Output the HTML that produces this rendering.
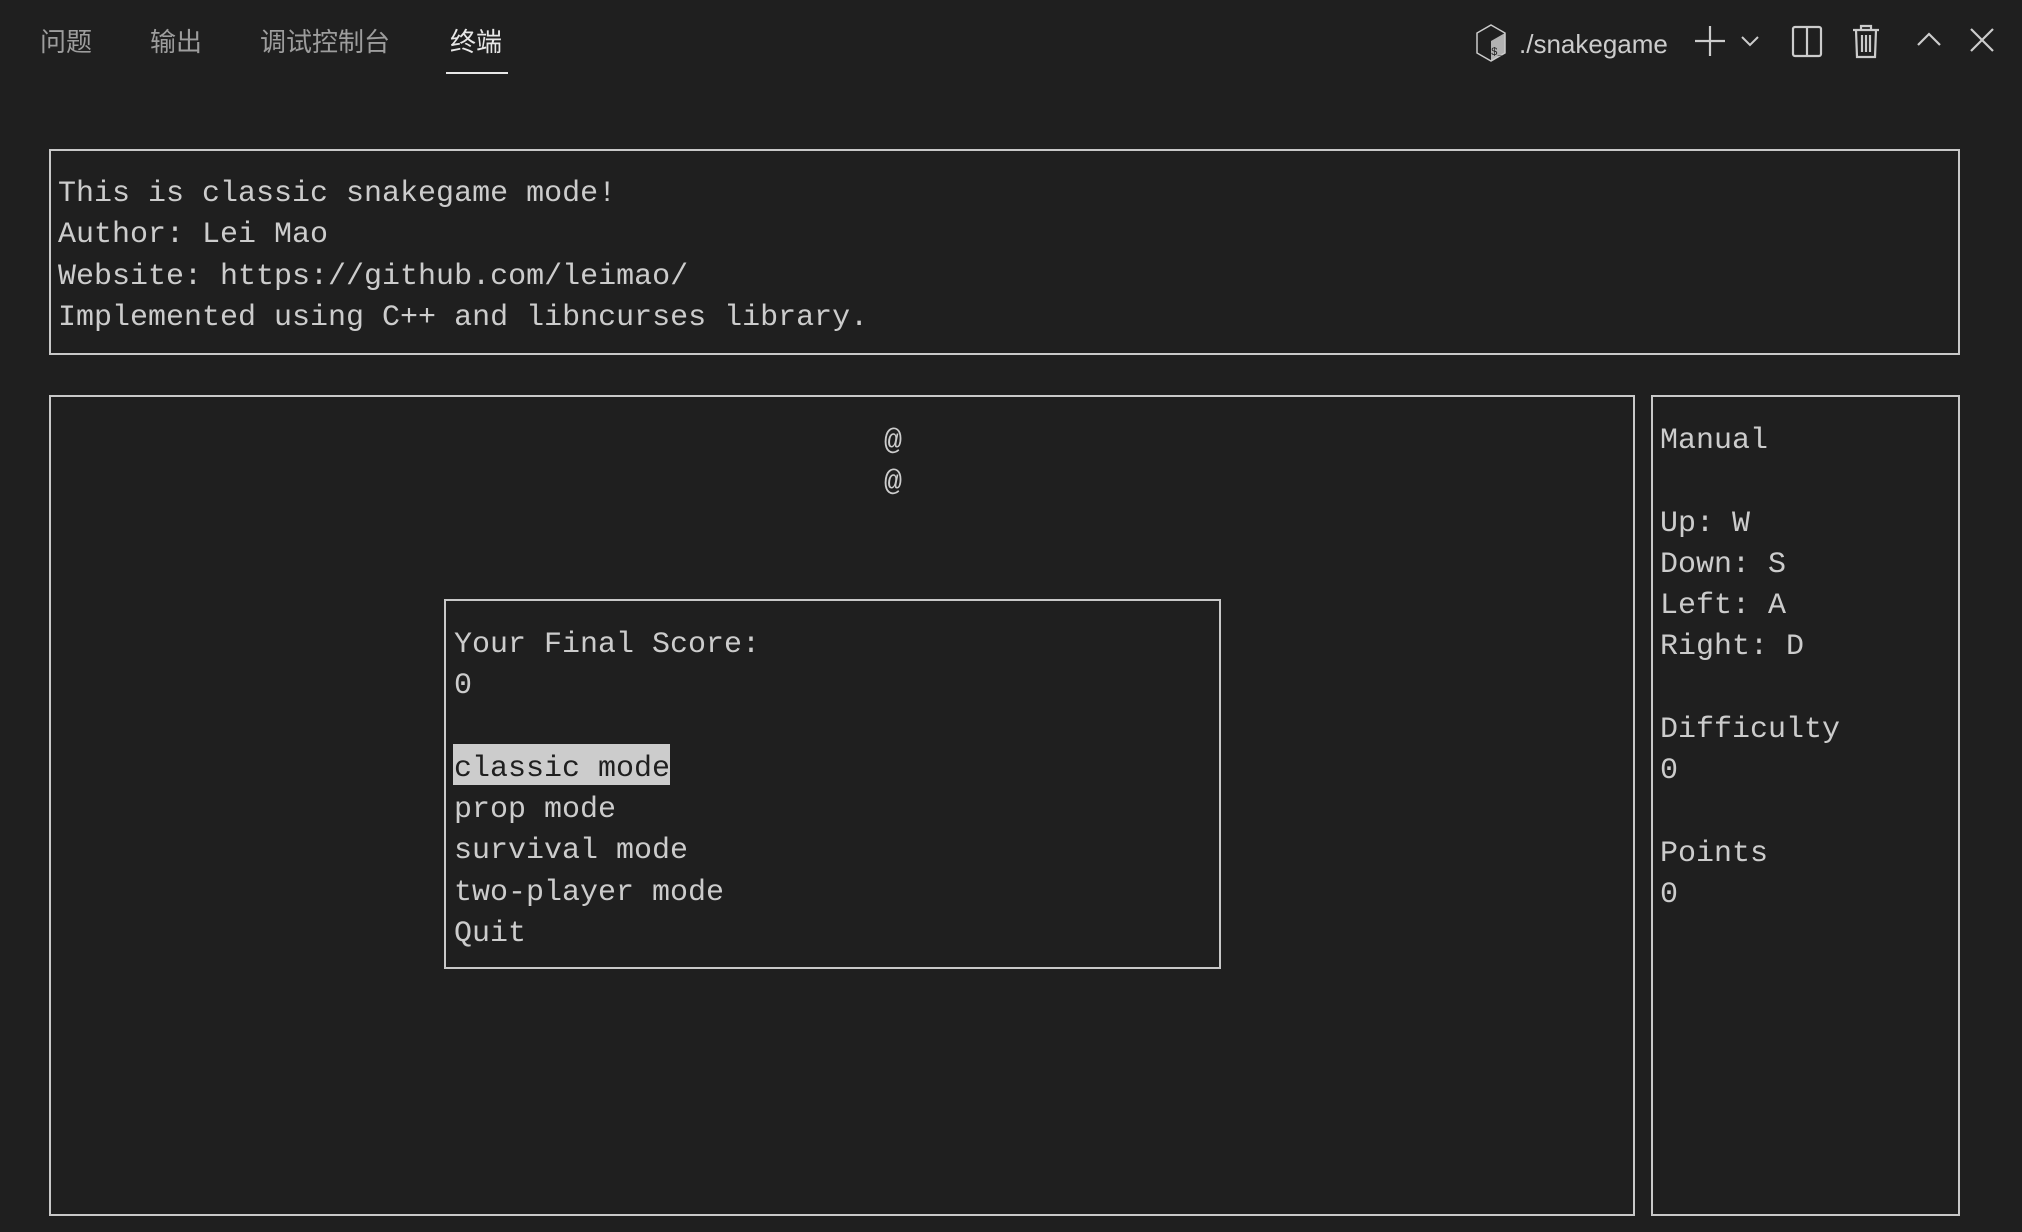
<!DOCTYPE html>
<html><head><meta charset="utf-8"><style>
html,body{margin:0;padding:0;background:#1f1f1f;width:2022px;height:1232px;overflow:hidden;position:relative}
.tab{position:absolute;top:22px;font-family:"Liberation Sans","Noto Sans CJK SC",sans-serif;font-size:26px;color:#9d9d9d;line-height:40px}
.box{position:absolute;border:2px solid #c8c8c8;box-sizing:border-box}
.t{position:absolute;font-family:"Liberation Mono",monospace;font-size:30px;color:#cccccc;line-height:41.3px;white-space:pre;margin:0}
.ic{position:absolute;top:24px}
</style></head><body>
<div class="tab" style="left:40px">问题</div>
<div class="tab" style="left:150px">输出</div>
<div class="tab" style="left:260px">调试控制台</div>
<div class="tab" style="left:450px;color:#e7e7e7">终端</div>
<div style="position:absolute;left:446px;top:72px;width:62px;height:2px;background:#e7e7e7"></div>

<svg class="ic" style="left:1474px;top:23px" width="34" height="40" viewBox="0 0 34 40"><path d="M17 2 L31 10 L31 30 L17 38 L3 30 L3 10 Z" fill="none" stroke="#ccc" stroke-width="1.5"/><path d="M17 38 L31 30 L31 10 L17 18 Z" fill="#ccc" opacity=".85"/><text x="17" y="32" font-size="11" fill="#1f1f1f" font-family="Liberation Mono">$_</text></svg>
<div style="position:absolute;left:1519px;top:24px;font-family:'Liberation Sans',sans-serif;font-size:26px;color:#cccccc;line-height:40px">./snakegame</div>
<svg class="ic" style="left:1693px" width="34" height="34" viewBox="0 0 34 34"><path d="M17 2V32M2 17H32" stroke="#ccc" stroke-width="2.2"/></svg>
<svg class="ic" style="left:1738px" width="24" height="34" viewBox="0 0 24 34"><path d="M4 13L12 21L20 13" fill="none" stroke="#ccc" stroke-width="2"/></svg>
<svg class="ic" style="left:1790px" width="34" height="34" viewBox="0 0 34 34"><rect x="3" y="3" width="28" height="29" rx="2" fill="none" stroke="#ccc" stroke-width="2.2"/><path d="M17 3V32" stroke="#ccc" stroke-width="2.2"/></svg>
<svg class="ic" style="left:1850px" width="32" height="36" viewBox="0 0 32 36"><path d="M3 6H29M11 6V2H21V6M6 6L7 33H25L26 6M12 11V28M16 11V28M20 11V28" fill="none" stroke="#ccc" stroke-width="2.2"/></svg>
<svg class="ic" style="left:1913px" width="32" height="34" viewBox="0 0 32 34"><path d="M5 21L16 10L27 21" fill="none" stroke="#ccc" stroke-width="2.2"/></svg>
<svg class="ic" style="left:1966px" width="32" height="34" viewBox="0 0 32 34"><path d="M5 5L27 27M27 5L5 27" fill="none" stroke="#ccc" stroke-width="2.2"/></svg>

<div class="box" style="left:49px;top:149px;width:1911px;height:206px"></div>
<pre class="t" style="left:58px;top:174px">This is classic snakegame mode!
Author: Lei Mao
Website: https://github.com/leimao/
Implemented using C++ and libncurses library.</pre>

<div class="box" style="left:49px;top:395px;width:1586px;height:821px"></div>
<div class="box" style="left:1651px;top:395px;width:309px;height:821px"></div>

<pre class="t" style="left:884px;top:422px">@
@</pre>

<div class="box" style="left:444px;top:599px;width:777px;height:370px"></div>
<div style="position:absolute;left:453px;top:744px;width:217px;height:41px;background:#cccccc"></div>
<pre class="t" style="left:454px;top:625px">Your Final Score:
0

<span style="color:#1f1f1f">classic mode</span>
prop mode
survival mode
two-player mode
Quit</pre>

<pre class="t" style="left:1660px;top:421px">Manual

Up: W
Down: S
Left: A
Right: D

Difficulty
0

Points
0</pre>
</body></html>
